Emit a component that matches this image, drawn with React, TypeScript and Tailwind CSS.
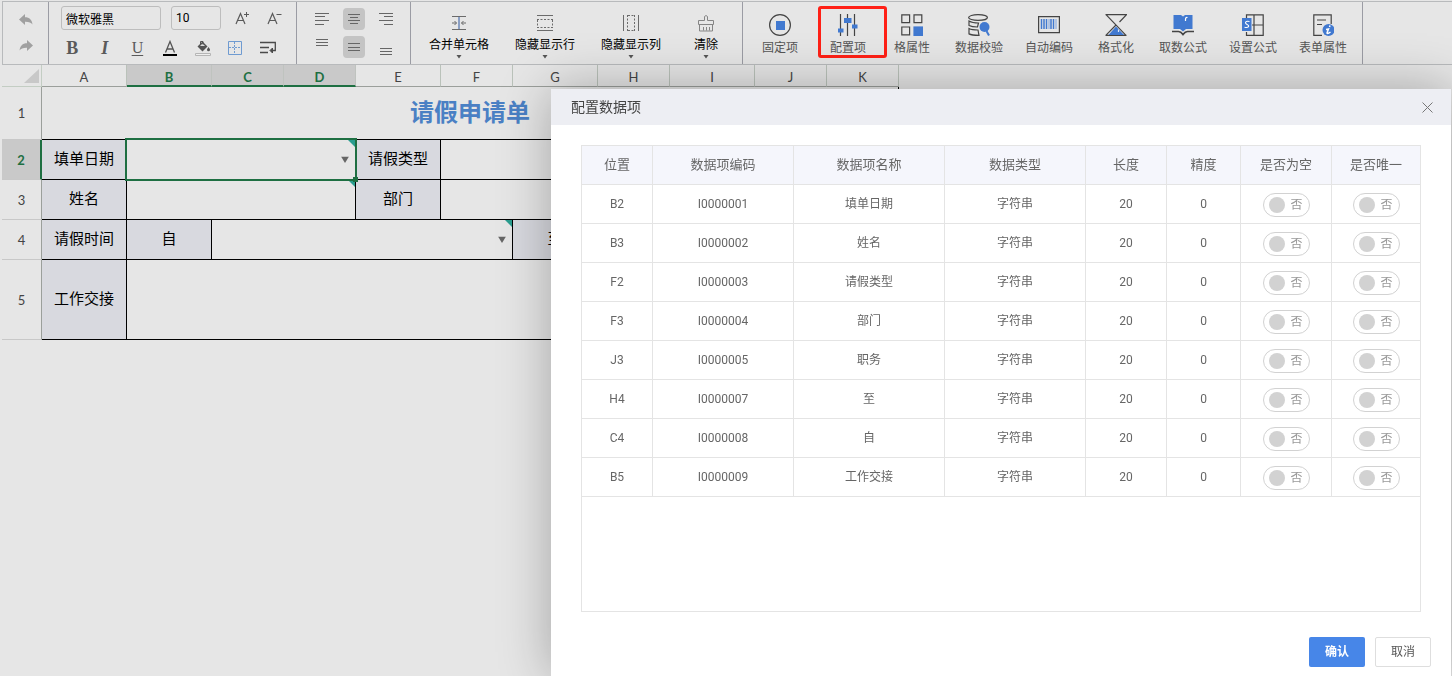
import { useState } from "react";
import type { ReactNode } from "react";

const FONT = "font-['Roboto','Noto_Sans_CJK_SC',sans-serif]";

interface DataItem {
  position: string;
  code: string;
  name: string;
  type: string;
  length: number;
  precision: number;
}

const items: DataItem[] = [
  { position: "B2", code: "I0000001", name: "填单日期", type: "字符串", length: 20, precision: 0 },
  { position: "B3", code: "I0000002", name: "姓名", type: "字符串", length: 20, precision: 0 },
  { position: "F2", code: "I0000003", name: "请假类型", type: "字符串", length: 20, precision: 0 },
  { position: "F3", code: "I0000004", name: "部门", type: "字符串", length: 20, precision: 0 },
  { position: "J3", code: "I0000005", name: "职务", type: "字符串", length: 20, precision: 0 },
  { position: "H4", code: "I0000007", name: "至", type: "字符串", length: 20, precision: 0 },
  { position: "C4", code: "I0000008", name: "自", type: "字符串", length: 20, precision: 0 },
  { position: "B5", code: "I0000009", name: "工作交接", type: "字符串", length: 20, precision: 0 },
];

/* ---------- Ribbon ---------- */

function Caret() {
  return (
    <svg width="6" height="4" viewBox="0 0 6 4" fill="#555">
      <path d="M0.5 0h5L3 3.5z" />
    </svg>
  );
}

function LineIcon({ lines }: { lines: [number, number, number][] }) {
  return (
    <svg width="22" height="22" viewBox="0 0 22 22" stroke="#666" shapeRendering="crispEdges">
      {lines.map(([x, y, w]) => (
        <path key={y} d={`M${x} ${y + 0.5}h${w}`} />
      ))}
    </svg>
  );
}

function IconButton({ label, active, children }: { label: string; active?: boolean; children: ReactNode }) {
  return (
    <button
      aria-label={label}
      className={`flex size-[22px] items-center justify-center rounded-sm ${active ? "bg-[#c4c4c4]" : ""}`}
    >
      {children}
    </button>
  );
}

function HistoryGroup() {
  const arrow = "M0 5.500 6 0v3.200c4.500 0 7 2.600 7.500 7.300C12 8.300 9.800 7.600 6 7.700V11z";
  return (
    <div className="flex w-[46px] shrink-0 flex-col items-center gap-[14px] border-r border-[#9b9ca4] pt-3">
      <button aria-label="撤销">
        <svg width="14" height="12" viewBox="0 0 14 12" fill="#a0a0a0" className="block">
          <path d={arrow} />
        </svg>
      </button>
      <button aria-label="重做">
        <svg width="14" height="12" viewBox="0 0 14 12" fill="#a0a0a0" className="block">
          <path d={arrow} transform="translate(14 0) scale(-1 1)" />
        </svg>
      </button>
    </div>
  );
}

function FontGroup() {
  return (
    <div className="w-[248px] shrink-0 border-r border-[#9b9ca4] pt-1">
      <div className="flex items-center pl-3">
        <input
          aria-label="字体"
          defaultValue="微软雅黑"
          className="h-6 w-[100px] rounded-[3px] border border-[#bdbdbd] px-1 text-xs text-black"
        />
        <input
          aria-label="字号"
          defaultValue="10"
          className="ml-[10px] h-6 w-[50px] rounded-[3px] border border-[#bdbdbd] px-1 text-xs text-black"
        />
        <button aria-label="增大字号" className="ml-[5px] flex w-8 justify-center">
          <svg width="16" height="16" viewBox="0 0 16 16" fill="none" stroke="#5a5a5a">
            <path strokeWidth="1.200" d="M2 14 6.500 3.500 11 14M3.500 10.500h6" />
            <path d="M10 4.500h5M12.500 2v5" />
          </svg>
        </button>
        <button aria-label="减小字号" className="flex w-8 justify-center">
          <svg width="16" height="16" viewBox="0 0 16 16" fill="none" stroke="#5a5a5a">
            <path strokeWidth="1.200" d="M2 14 6.500 3.500 11 14M3.500 10.500h6" />
            <path d="M10.500 4.500h5" />
          </svg>
        </button>
      </div>
      <div className="mr-3 ml-[7px] grid h-9 grid-cols-7 place-items-center font-['Liberation_Serif',serif] text-lg leading-5 text-[#5a5a5a]">
        <button aria-label="加粗" className="font-bold">B</button>
        <button aria-label="倾斜" className="font-bold italic">I</button>
        <button aria-label="下划线" className="text-base leading-5 underline underline-offset-2">U</button>
        <button aria-label="字体颜色">
          <svg width="16" height="16" viewBox="0 0 16 16" fill="none" stroke="#555">
            <path strokeWidth="1.300" d="M3.500 12.500 8 1.500l4.500 11M5 9h6" />
            <path stroke="#000" strokeWidth="2" d="M1 15h14" />
          </svg>
        </button>
        <button aria-label="填充颜色">
          <svg width="16" height="16" viewBox="0 0 16 16">
            <path fill="#555" d="M2.500 6.500 7.500 1.500l5 5-5 5z" />
            <path fill="#ddd" d="M5 6 7.500 3.500 10 6z" />
            <path fill="none" stroke="#555" d="M5.500 4.500V1.500h2.500v3" />
            <path fill="#555" d="M13.500 7c1 1.500 1.500 2 1.500 2.700a1.500 1.500 0 0 1-3 0c0-.7.5-1.200 1.500-2.700z" />
            <path fill="#eee" stroke="#b5b5b5" d="M.5 13.500h15v2H.5z" />
          </svg>
        </button>
        <button aria-label="边框">
          <svg width="14" height="14" viewBox="0 0 14 14" fill="none">
            <path stroke="#6f9bd1" d="M.5.5h13v13H.5z" />
            <path stroke="#6f9bd1" strokeDasharray="2 1" d="M6.500 1v12M1 6.500h12" />
          </svg>
        </button>
        <button aria-label="自动换行">
          <svg width="16" height="14" viewBox="0 0 16 14" fill="none" stroke="#4a4a4a">
            <path strokeWidth="1.300" d="M0 1.500h15.300v8H11M0 6.500h9M0 11.500h8" />
            <path fill="#4a4a4a" d="M12.500 7v5L10 9.500z" />
          </svg>
        </button>
      </div>
    </div>
  );
}

function AlignGroup() {
  return (
    <div className="w-[114px] shrink-0 border-r border-[#9b9ca4] pt-[6px] pl-[14px]">
      <div className="grid w-[86px] grid-cols-3 gap-x-[10px] gap-y-[6px]">
        <IconButton label="左对齐">
          <LineIcon lines={[[4, 5, 14], [4, 8, 10], [4, 12, 14], [4, 16, 9]]} />
        </IconButton>
        <IconButton label="水平居中" active>
          <LineIcon lines={[[5, 6, 12], [7, 9, 8], [5, 12, 12], [7, 15, 8]]} />
        </IconButton>
        <IconButton label="右对齐">
          <LineIcon lines={[[4, 5, 14], [9, 8, 9], [4, 12, 14], [9, 16, 9]]} />
        </IconButton>
        <IconButton label="顶端对齐">
          <LineIcon lines={[[5, 3, 12], [5, 6, 12], [5, 9, 12]]} />
        </IconButton>
        <IconButton label="垂直居中" active>
          <LineIcon lines={[[5, 7, 12], [5, 11, 12], [5, 14, 12]]} />
        </IconButton>
        <IconButton label="底端对齐">
          <LineIcon lines={[[5, 12, 12], [5, 15, 12], [5, 18, 12]]} />
        </IconButton>
      </div>
    </div>
  );
}

function MenuButton({ label, wide = true, children }: { label: string; wide?: boolean; children: ReactNode }) {
  return (
    <button className={`flex flex-col items-center pt-3 text-xs leading-4 text-black ${wide ? "w-[86px]" : "w-16"}`}>
      <svg width="18" height="18" viewBox="0 0 18 18" fill="none" stroke="#6b6b6b">
        {children}
      </svg>
      <span className="mt-[5px] mb-[2px]">{label}</span>
      <Caret />
    </button>
  );
}

function CellsGroup() {
  return (
    <div className="flex w-[332px] shrink-0 items-start border-r border-[#9b9ca4] pl-[5px]">
      <MenuButton label="合并单元格">
        <path d="M2 2.500h14M2 15.500h14" />
        <path stroke="#8a9fc4" strokeWidth="2" d="M9 3v12" />
        <path d="M2 9h4.500M4.500 7l2 2-2 2M16 9h-4.500M13.500 7l-2 2 2 2" />
      </MenuButton>
      <MenuButton label="隐藏显示行">
        <path d="M1 1.500h16M1 16.500h16" />
        <path strokeDasharray="2 1.500" d="M1 5.500h16M1 13.500h16M1.500 6v8M16.500 6v8" />
      </MenuButton>
      <MenuButton label="隐藏显示列">
        <path d="M1.500 1v16M16.500 1v16" />
        <path strokeDasharray="2 1.500" d="M5.500 1v16M12.500 1v16M6 1.500h7M6 16.500h7" />
      </MenuButton>
      <MenuButton label="清除" wide={false}>
        <path stroke="#858585" d="M7.500 6.500v-4q1.500-2 3 0v4h6v4h-15v-4zM2.500 10.500v6.500h13v-6.500M6.500 13v3.500M9.500 13v3.500M12.500 13v3.500" />
      </MenuButton>
    </div>
  );
}

function ToolButton({
  label,
  className = "w-[70px]",
  children,
}: {
  label: string;
  className?: string;
  children: ReactNode;
}) {
  return (
    <button className={`flex flex-col items-center gap-1 pt-3 text-xs leading-4 text-[#555] ${className}`}>
      <svg width="22" height="22" viewBox="0 0 22 22" fill="none" stroke="#444" strokeWidth="1.200">
        {children}
      </svg>
      <span className="whitespace-nowrap">{label}</span>
    </button>
  );
}

function FormGroup() {
  return (
    <div className="flex w-[620px] shrink-0 items-start border-r border-[#9b9ca4] pl-[5px]">
      <ToolButton label="固定项" className="mr-1 w-16">
        <circle cx="11" cy="11" r="10.400" />
        <path fill="#4179d0" stroke="none" d="M7 7h9v9H7z" />
      </ToolButton>
      <div className="relative">
        <ToolButton label="配置项" className="w-16">
          <path d="M3.500 0v22M10.500 0v22M17.500 0v22" />
          <path fill="#4179d0" stroke="none" d="M1 14.500h5.500v4H1zM7 4h7.500v5H7zM15 10.500h5.500v4H15z" />
        </ToolButton>
        <div className="pointer-events-none absolute top-1 left-[2px] h-[52px] w-[69px] rounded-[3px] border-3 border-[#ff2016]" />
      </div>
      <ToolButton label="格属性" className="w-16">
        <path d="M.8.8h7.800v7.800H.8zM13 .8h7.800v7.800H13zM.8 13h7.800v7.800H.8z" />
        <path fill="#4179d0" stroke="none" d="M12.400 12.400H22V22h-9.600z" />
      </ToolButton>
      <ToolButton label="数据校验">
        <ellipse cx="10" cy="3.500" rx="9.400" ry="2.900" />
        <path d="M1 7c2 1.200 5 2 9.500 2l-1 4C5 13 3 12.500 1 11.500zM1 14.500c1.500.8 5 1.500 9 1.500l1 5.400c-5 0-8-.4-10-1.500z" />
        <circle cx="16.500" cy="13" r="5" fill="#4179d0" stroke="none" />
        <path stroke="#4179d0" strokeWidth="2" d="m18.500 17 2.500 4.500" />
      </ToolButton>
      <ToolButton label="自动编码">
        <path d="M.6 2.600h20.800v16H.6z" />
        <path stroke="#4179d0" strokeWidth="1.500" d="M3.500 5v10M6 5v10M8.500 5v10M13 5v10M15.500 5v10" />
        <path stroke="#7aa2e2" strokeWidth="1" d="M11 5v10M18 5v10" />
      </ToolButton>
      <ToolButton label="格式化" className="w-16">
        <path d="M.5.6h21L14.500 8M1 .6l20 20.800M.5 21.400h21M11 11 .8 21.400" />
        <path fill="#4179d0" stroke="none" d="M11 12.500 19 21H3.500z" />
        <path stroke="#dfe8f7" d="M13.500 15.500v2.500" />
      </ToolButton>
      <ToolButton label="取数公式">
        <path fill="#4179d0" stroke="none" d="M1.500 1H9l2 1.500L13 1h7.500v14H14l-3 2.500L8 15H1.500z" />
        <path stroke="#fff" d="M15.500 3.500q-2-.5-2 2V7" />
        <path strokeWidth="1.700" d="M0 17.500h6.500c2 0 3 1 4.500 3 1.500-2 2.500-3 4.500-3H22" />
      </ToolButton>
      <ToolButton label="设置公式">
        <path d="M4.500 4V.8h16.700v20.600H4.500V18M12 .8v20.600M10 11h11" />
        <path fill="#4179d0" stroke="none" d="M0 4h9.500v13H0z" />
        <path stroke="#fff" strokeWidth="1.100" d="M7.500 7.500q-4-.8-4 1.300c0 2 3.200 1.200 3.200 3.200q-.2 2-4.200 1.200" />
      </ToolButton>
      <ToolButton label="表单属性">
        <path d="M10 21.400H1.800V.8h17.400V10M5 6h9M5 10.500h5" />
        <circle cx="16.500" cy="16" r="6" fill="#4179d0" stroke="none" />
        <path stroke="#fff" strokeWidth="1.500" d="M18 11.500l-.5 1.500M14 15.500l2.500-.5-1.500 4q.5 1.200 3.500-1" />
      </ToolButton>
    </div>
  );
}

function Ribbon() {
  return (
    <header className="mt-px ml-[2px] flex h-16 overflow-hidden border-y border-l border-[#b8babc]">
      <HistoryGroup />
      <FontGroup />
      <AlignGroup />
      <CellsGroup />
      <FormGroup />
    </header>
  );
}

/* ---------- Sheet ---------- */

const columns = ["A", "B", "C", "D", "E", "F", "G", "H", "I", "J", "K"];
const selectedColumns = ["B", "C", "D"];

function RowHead({ n, active }: { n: number; active?: boolean }) {
  return (
    <th
      scope="row"
      className={
        active
          ? "border-r-2 border-b border-r-[#1e6f42] border-b-[#c8c8c8] bg-[#c9c9c9] font-bold text-[#1e6f42]"
          : "border-r border-b border-r-[#9b9f9b] border-b-[#c8c8c8] font-normal text-[#444]"
      }
    >
      {n}
    </th>
  );
}

function LabelCell({ children }: { children: ReactNode }) {
  return <td className="border-r border-b border-black bg-[#d8d9df] pb-1">{children}</td>;
}

function FieldCell({
  span,
  marked,
  dropdown,
  selected,
}: {
  span: number;
  marked?: boolean;
  dropdown?: boolean;
  selected?: boolean;
}) {
  return (
    <td colSpan={span} className="relative border-r border-b border-black">
      {marked && (
        <span className="absolute top-0 right-0 size-[7px] bg-[#2a9d8f] [clip-path:polygon(0_0,100%_0,100%_100%)]" />
      )}
      {dropdown && (
        <button aria-label="展开" className="absolute top-1/2 right-[6px] -translate-y-1/2">
          <svg width="8" height="7" viewBox="0 0 8 7" fill="#666" className="block">
            <path d="M0 0h8L4 6.500z" />
          </svg>
        </button>
      )}
      {selected && (
        <span className="pointer-events-none absolute -inset-[2px] z-10 border-2 border-[#1e6f42]">
          <span className="absolute -right-[3px] -bottom-[3px] size-[5px] bg-[#1e6f42]" />
        </span>
      )}
    </td>
  );
}

function Sheet() {
  return (
    <table className="ml-[2px] w-[897px] table-fixed border-separate border-spacing-0 text-center font-['Noto_Sans_CJK_SC',sans-serif] text-[15px] leading-5 text-black [&_th]:font-['Lato',sans-serif] [&_th]:text-[13px] [&_th]:leading-4">
      <colgroup>
        <col className="w-[40px]" />
        <col className="w-[85px]" />
        <col className="w-[85px]" />
        <col className="w-[72px]" />
        <col className="w-[72px]" />
        <col className="w-[85px]" />
        <col className="w-[72px]" />
        <col className="w-[85px]" />
        <col className="w-[72px]" />
        <col className="w-[85px]" />
        <col className="w-[72px]" />
        <col className="w-[72px]" />
      </colgroup>
      <thead>
        <tr className="h-[22px]">
          <td className="border-r border-b border-[#c3cdc3] pr-[2px]">
            <svg width="15" height="14" viewBox="0 0 15 14" fill="#c8c8c8" className="ml-auto block">
              <path d="M15 0v14H0z" />
            </svg>
          </td>
          {columns.map((c) => (
            <th
              key={c}
              scope="col"
              className={
                selectedColumns.includes(c)
                  ? "border-r border-b-2 border-r-[#bfc3bf] border-b-[#1e6f42] bg-[#c9c9c9] pt-[3px] font-bold text-[#1e6f42]"
                  : "border-r border-b border-r-[#bac2ba] border-b-[#9b9f9b] pt-[3px] font-normal text-[#444]"
              }
            >
              {c}
            </th>
          ))}
        </tr>
      </thead>
      <tbody>
        <tr className="h-[53px]">
          <RowHead n={1} />
          <td colSpan={11} className="border-r border-b border-black pb-1 text-2xl leading-8 font-bold text-[#4a80c4]">
            请假申请单
          </td>
        </tr>
        <tr className="h-10">
          <RowHead n={2} active />
          <LabelCell>填单日期</LabelCell>
          <FieldCell span={3} marked dropdown selected />
          <LabelCell>请假类型</LabelCell>
          <FieldCell span={6} />
        </tr>
        <tr className="h-10">
          <RowHead n={3} />
          <LabelCell>姓名</LabelCell>
          <FieldCell span={3} marked />
          <LabelCell>部门</LabelCell>
          <FieldCell span={6} />
        </tr>
        <tr className="h-10">
          <RowHead n={4} />
          <LabelCell>请假时间</LabelCell>
          <LabelCell>自</LabelCell>
          <FieldCell span={4} marked dropdown />
          <LabelCell>至</LabelCell>
          <FieldCell span={4} />
        </tr>
        <tr className="h-20">
          <RowHead n={5} />
          <LabelCell>工作交接</LabelCell>
          <FieldCell span={10} />
        </tr>
      </tbody>
    </table>
  );
}

/* ---------- Dialog ---------- */

function Switch({ label }: { label: string }) {
  const [on, setOn] = useState(false);
  return (
    <label
      className={`mx-auto mt-[2px] flex h-6 w-[47px] cursor-pointer items-center justify-between rounded-full border pr-[6px] pl-[5px] ${
        on ? "flex-row-reverse border-[#4786e8] text-[#4786e8]" : "border-[#d2d2d2] text-[#999]"
      }`}
    >
      <input
        type="checkbox"
        role="switch"
        aria-label={label}
        checked={on}
        onChange={(e) => setOn(e.target.checked)}
        className="sr-only"
      />
      <span className={`size-4 rounded-full ${on ? "bg-[#4786e8]" : "bg-[#d2d2d2]"}`} />
      <span className="text-xs leading-4">{on ? "是" : "否"}</span>
    </label>
  );
}

const dialogHeads = ["位置", "数据项编码", "数据项名称", "数据类型", "长度", "精度", "是否为空", "是否唯一"];

function ConfigDialog() {
  return (
    <section
      role="dialog"
      aria-labelledby="dialog-title"
      className="fixed top-[89px] right-px bottom-0 z-20 w-[900px] bg-white shadow-[1px_1px_50px_rgba(0,0,0,0.3)]"
    >
      <div className="flex h-9 items-center justify-between bg-[#edeef3] pr-[18px] pl-5">
        <h2 id="dialog-title" className="text-sm text-[#444]">
          配置数据项
        </h2>
        <button aria-label="关闭">
          <svg width="11" height="11" viewBox="0 0 11 11" stroke="#777" className="block">
            <path d="m.5.5 10 10M10.500.5l-10 10" />
          </svg>
        </button>
      </div>

      <div className="mx-[30px] mt-5 min-h-[467px] border border-[#e4e4e4]">
        <table className="w-full table-fixed border-separate border-spacing-0 text-center text-xs text-[#666] [&_td]:border-b [&_td]:border-[#e4e4e4] [&_td:not(:last-child)]:border-r [&_th]:border-b [&_th]:border-[#e4e4e4] [&_th:not(:last-child)]:border-r">
          <colgroup>
            <col className="w-[71px]" />
            <col className="w-[141px]" />
            <col className="w-[151px]" />
            <col className="w-[141px]" />
            <col className="w-[81px]" />
            <col className="w-[74px]" />
            <col className="w-[91px]" />
            <col />
          </colgroup>
          <thead>
            <tr className="h-[39px] bg-[#f5f6fc] text-[13px]">
              {dialogHeads.map((h) => (
                <th key={h} scope="col" className="font-normal">
                  {h}
                </th>
              ))}
            </tr>
          </thead>
          <tbody>
            {items.map((item) => (
              <tr key={item.code} className="h-[39px]">
                <td>{item.position}</td>
                <td>{item.code}</td>
                <td>{item.name}</td>
                <td>{item.type}</td>
                <td>{item.length}</td>
                <td>{item.precision}</td>
                <td>
                  <Switch label={`${item.name} 是否为空`} />
                </td>
                <td>
                  <Switch label={`${item.name} 是否唯一`} />
                </td>
              </tr>
            ))}
          </tbody>
        </table>
      </div>

      <div className="mt-[25px] flex justify-end gap-[10px] pr-5 text-xs">
        <button className="h-[30px] w-14 rounded-[2px] bg-[#4786e8] font-bold text-white">确认</button>
        <button className="h-[30px] w-14 rounded-[2px] border border-[#dedede] bg-white text-[#555]">取消</button>
      </div>
    </section>
  );
}

export default function App() {
  return (
    <div className={`flow-root min-h-screen overflow-hidden bg-[#e6e6e6] ${FONT}`}>
      <Ribbon />
      <Sheet />
      <ConfigDialog />
    </div>
  );
}
